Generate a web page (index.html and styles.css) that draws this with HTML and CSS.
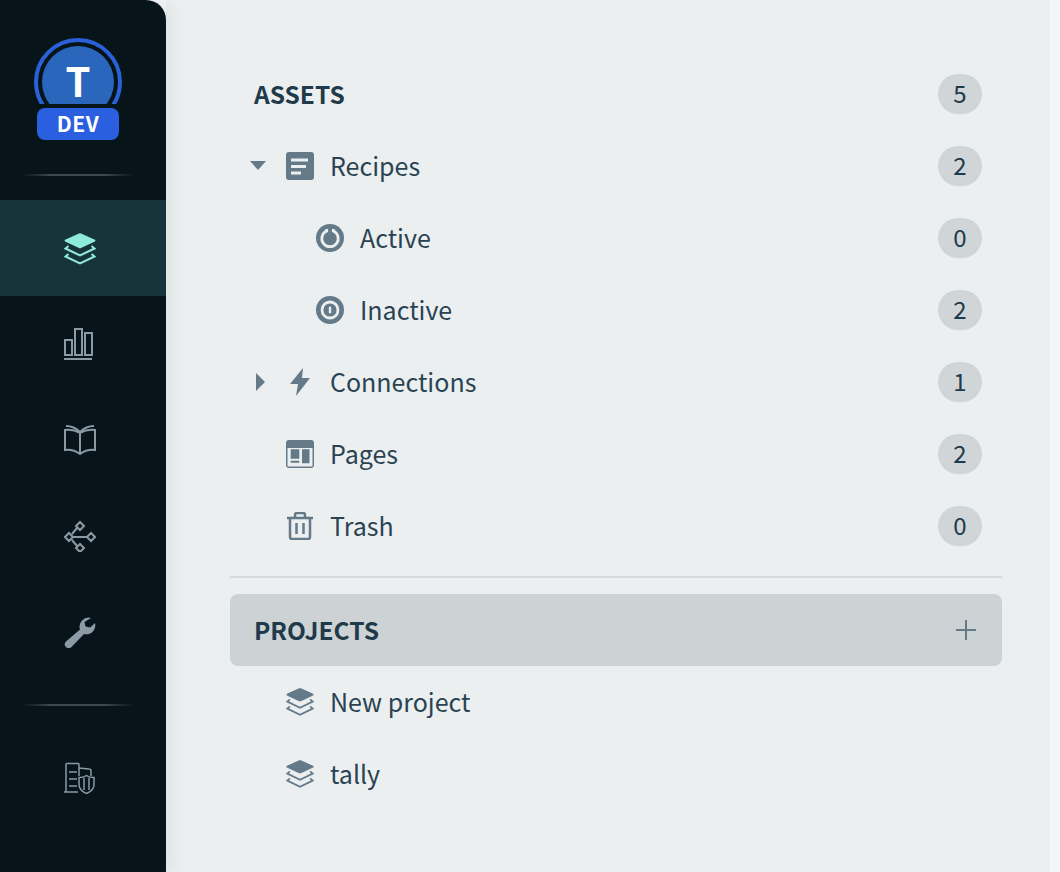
FILE: index.html
```html
<!DOCTYPE html>
<html lang="en">
<head>
<meta charset="utf-8">
<title>Assets</title>
<link rel="stylesheet" href="styles.css">
</head>
<body>
<svg class="defs" width="0" height="0" aria-hidden="true">
  <symbol id="layers" viewBox="0 0 32 32">
    <path class="fill" d="M15 .4a3 3 0 0 1 2 0L31 6.700q1 .9 0 1.800L17 15a3 3 0 0 1-2 0L1 8.500q-1-.9 0-1.800Z"/>
    <path class="line" d="M4.500 13 1.500 15.500 16 22.500 30.500 15.500 27.500 13"/>
    <path class="line" d="M4.500 21 1.500 23.500 16 30.500 30.500 23.500 27.500 21"/>
  </symbol>
</svg>
<div class="app">
  <aside class="sidebar">
    <div class="avatar-wrap">
      <div class="avatar">
        <svg class="ring" width="88" height="66" viewBox="0 0 88 66"><circle cx="44" cy="44" r="42" fill="none" stroke="#2a61d8" stroke-width="4"/></svg>
        <div class="disc">T</div>
        <div class="env">DEV</div>
      </div>
    </div>
    <div class="rule rule-top"></div>
    <nav class="nav">
      <a class="nav-item active"><svg class="layers-nav" width="32" height="32"><use href="#layers"/></svg></a>
      <a class="nav-item">
        <svg width="32" height="32" viewBox="0 0 32 32" class="stroke-icon"><path d="M1 12h7v15H1zM11 1h7v26h-7zM21 5h7v22h-7z"/><path d="M0 31h28"/></svg>
      </a>
      <a class="nav-item">
        <svg width="32" height="32" viewBox="0 0 32 32" class="stroke-icon"><path d="M16 9Q9 5 1 6v20q8-1 15 4 7-5 15-4V6q-8-1-15 3v21"/><path d="M2 2q8 0 14 6 6-6 14-6"/></svg>
      </a>
      <a class="nav-item">
        <svg width="32" height="32" viewBox="0 0 32 32" class="stroke-icon"><path d="M5 13 1 17l4 4 4-4zM27 13l-4 4 4 4 4-4zM16 2l-4 4 4 4 4-4zM16 24l-4 4 4 4 4-4zM9 17h14M8 14l5-6M8 20l5 6"/></svg>
      </a>
      <a class="nav-item">
        <svg width="32" height="32" viewBox="0 0 32 32"><path class="wrench" d="M27 2a9 9 0 0 0-11 11.500L2 25.500a3.800 3.800 0 0 0 5.500 5.500L20 18a9 9 0 0 0 11-11l-5 4.500-4.500-1-1-4.500Z"/></svg>
      </a>
    </nav>
    <div class="rule rule-bottom"></div>
    <a class="nav-item nav-admin">
      <svg width="32" height="32" viewBox="0 0 32 32" class="thin-icon"><path d="M0 30h14M2 30V2.500q0-1 1-1h11q1 0 1 1V14M5 10h8M5 17h8M5 24h8M15 6l10 1q2 0 2 2v5M15 15.500q5 0 7.500-2 2.500 2 7.500 2v7q0 6-7.500 9-7.500-3-7.500-9zM20 16v12M25 16v12"/></svg>
    </a>
  </aside>

  <main class="main">
    <ul class="tree">
      <li class="row head"><span class="label">ASSETS</span><span class="count">5</span></li>
      <li class="row">
        <span class="caret"><svg width="16" height="10" viewBox="0 0 16 10"><path class="ic" d="M0 0h16L8 9Z"/></svg></span>
        <svg class="icon" width="28" height="28" viewBox="0 0 28 28"><rect class="ic" width="28" height="28" rx="3"/><path class="knock" d="M5 6.500h17v3H5zM5 13h15v3H5zM5 19.500h10v3H5z"/></svg>
        <span class="label">Recipes</span><span class="count">2</span>
      </li>
      <li class="row sub">
        <svg class="icon" width="28" height="28" viewBox="0 0 28 28"><circle cx="14" cy="14" r="14" class="ic"/><path class="cut" d="M10.700 5V7a8.200 8.200 0 1 0 6.600 0V5"/></svg>
        <span class="label">Active</span><span class="count">0</span>
      </li>
      <li class="row sub">
        <svg class="icon" width="28" height="28" viewBox="0 0 28 28"><circle cx="14" cy="14" r="14" class="ic"/><circle cx="14" cy="14" r="8" class="cut"/><rect class="knock" x="12.800" y="10.500" width="2.400" height="7" rx="1.200"/></svg>
        <span class="label">Inactive</span><span class="count">2</span>
      </li>
      <li class="row">
        <span class="caret"><svg width="16" height="18" viewBox="0 0 16 18"><path class="ic" d="M6 0l9 9-9 9Z"/></svg></span>
        <svg class="icon" width="28" height="28" viewBox="0 0 28 28"><path class="ic" d="M17 0 4 16h8l-2 12 14-18h-8Z"/></svg>
        <span class="label">Connections</span><span class="count">1</span>
      </li>
      <li class="row">
        <span class="caret"></span>
        <svg class="icon" width="28" height="28" viewBox="0 0 28 28"><path class="ic" fill-rule="evenodd" d="M3 0h22a3 3 0 0 1 3 3v22a3 3 0 0 1-3 3H3a3 3 0 0 1-3-3V3a3 3 0 0 1 3-3ZM1.500 8v18.500h25V8Z"/><path class="ic" d="M4.700 9.300h8.600v9.400H4.700zM16 9.300h7.500v14H16zM4.700 20.700h8.600v2H4.700z"/></svg>
        <span class="label">Pages</span><span class="count">2</span>
      </li>
      <li class="row">
        <span class="caret"></span>
        <svg class="icon" width="28" height="28" viewBox="0 0 28 28"><path class="trash" d="M1 6h26M9 6V3q0-2 2-2h6q2 0 2 2v3M4 6v19q0 2 2 2h16q2 0 2-2V6M10.500 11v11M17.500 11v11"/></svg>
        <span class="label">Trash</span><span class="count">0</span>
      </li>
    </ul>
    <div class="divider"></div>
    <div class="row head projects"><span class="label">PROJECTS</span><svg class="plus" width="20" height="20" viewBox="0 0 20 20"><path d="M0 10h20M10 0v20"/></svg></div>
    <ul class="tree">
      <li class="row"><span class="caret"></span><svg class="icon layers-row" width="28" height="28"><use href="#layers"/></svg><span class="label">New project</span></li>
      <li class="row"><span class="caret"></span><svg class="icon layers-row" width="28" height="28"><use href="#layers"/></svg><span class="label">tally</span></li>
    </ul>
  </main>
  <div class="edge"></div>
</div>
</body>
</html>
```
FILE: styles.css
```css
* { box-sizing: border-box; }
html, body { margin: 0; height: 100%; }
body {
  font-family: "Noto Sans CJK SC", "Noto Sans", sans-serif;
  color: #1f3a4a;
  background: #f3f5f6;
  overflow: hidden;
}
.defs { position: absolute; }
.app { display: flex; height: 872px; }

.sidebar {
  flex: 0 0 166px;
  background: #07151b;
  border-top-right-radius: 20px;
  box-shadow: 6px 0 16px rgba(30, 50, 60, .07);
  position: relative;
  z-index: 1;
  display: flex;
  flex-direction: column;
}
.avatar-wrap { padding: 38px 0 0 34px; }
.avatar { position: relative; width: 88px; height: 102px; }
.ring { position: absolute; left: 0; top: 0; }
.disc {
  position: absolute;
  left: 8px;
  top: 8px;
  width: 72px;
  height: 72px;
  border-radius: 50%;
  background: #2b66bd;
  color: #fff;
  font-size: 40px;
  font-weight: 700;
  line-height: 68px;
  text-align: center;
  clip-path: inset(0 0 14px 0);
}
.env {
  position: absolute;
  left: 3px;
  top: 70px;
  width: 82px;
  height: 32px;
  border-radius: 8px;
  background: #2a5fe0;
  color: #fff;
  font-size: 21px;
  font-weight: 700;
  line-height: 30px;
  text-align: center;
  letter-spacing: .5px;
}
.rule {
  height: 2px;
  width: 110px;
  margin-left: 23px;
  background: linear-gradient(90deg, transparent, #3c484d 25%, #3c484d 75%, transparent);
}
.rule-top { margin-top: 34px; margin-bottom: 24px; }
.rule-bottom { margin-top: 24px; }
.nav { display: flex; flex-direction: column; }
.nav-item {
  height: 96px;
  display: flex;
  align-items: center;
  justify-content: center;
  padding-right: 6px;
}
.nav-item.active { background: #16343a; }
.nav-admin { margin-top: 24px; }
.layers-nav { color: #8eeadb; margin-top: 2px; }
.layers-row { color: #647a89; }
.fill { fill: currentColor; }
.line { fill: none; stroke: currentColor; stroke-width: 2; }
.stroke-icon { fill: none; stroke: #8b9aa4; stroke-width: 2; }
.thin-icon { fill: none; stroke: #8b9aa4; stroke-width: 1.500; }
.wrench { fill: #8b9aa4; }

.main {
  flex: 0 0 884px;
  background: #ebeff0;
  padding: 58px 48px 0 64px;
}
.tree { list-style: none; margin: 0; padding: 0; }
.row {
  height: 72px;
  display: flex;
  align-items: center;
  padding: 0 20px;
  font-size: 25px;
}
.row .label { flex: 1; color: #2a4352; padding-bottom: 2px; }
.caret { flex: 0 0 36px; display: flex; }
.icon { flex: none; margin-right: 16px; }
.sub { padding-left: 86px; }
.ic { fill: #647a89; }
.knock { fill: #ebeff0; }
.cut { fill: none; stroke: #ebeff0; stroke-width: 2.800; }
.trash { fill: none; stroke: #647a89; stroke-width: 2.500; }
.count {
  flex: none;
  width: 44px;
  height: 40px;
  border-radius: 20px;
  background: #d0d5d8;
  color: #1f3a4a;
  font-size: 24px;
  line-height: 37px;
  text-align: center;
}
.head { padding-left: 24px; font-size: 24.500px; }
.head .label { font-weight: 700; color: #1f3a4a; }
.divider { height: 2px; background: #d5d9dd; margin: 14px 0 16px; }
.projects { background: #cdd2d5; border-radius: 8px; }
.plus { fill: none; stroke: #647a89; stroke-width: 2; margin-right: 6px; }
.edge { flex: 1; background: #f3f5f6; }
```
